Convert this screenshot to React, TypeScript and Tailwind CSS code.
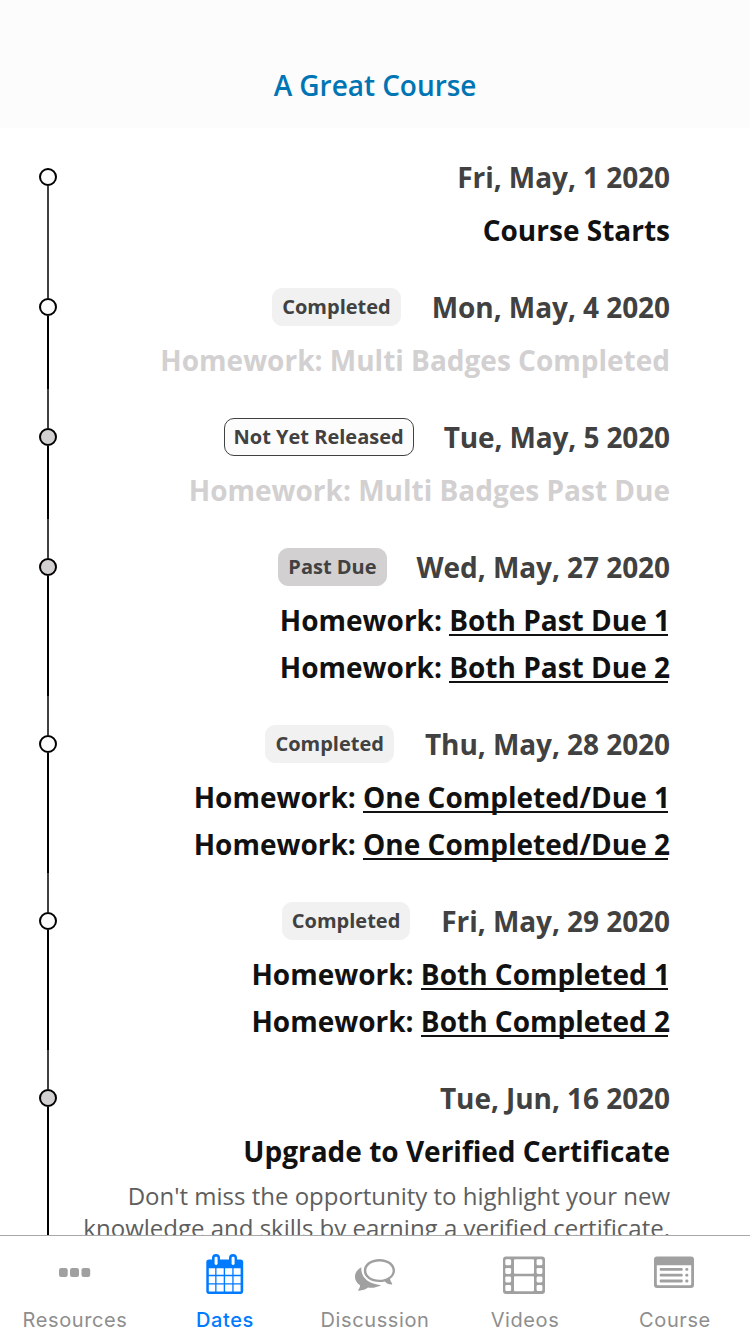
import React from "react";

type Badge = "completed" | "pending" | "pastDue";

interface CourseEvent {
  date: string;
  badge?: Badge;
  filled?: boolean;
  muted?: boolean;
  items: { label: string; link?: string }[];
  description?: string[];
}

const events: CourseEvent[] = [
  { date: "Fri, May, 1 2020", items: [{ label: "Course Starts" }] },
  { date: "Mon, May, 4 2020", badge: "completed", muted: true, items: [{ label: "Homework: Multi Badges Completed" }] },
  { date: "Tue, May, 5 2020", badge: "pending", filled: true, muted: true, items: [{ label: "Homework: Multi Badges Past Due" }] },
  {
    date: "Wed, May, 27 2020", badge: "pastDue", filled: true,
    items: [{ label: "Homework: ", link: "Both Past Due 1" }, { label: "Homework: ", link: "Both Past Due 2" }],
  },
  {
    date: "Thu, May, 28 2020", badge: "completed",
    items: [{ label: "Homework: ", link: "One Completed/Due 1" }, { label: "Homework: ", link: "One Completed/Due 2" }],
  },
  {
    date: "Fri, May, 29 2020", badge: "completed",
    items: [{ label: "Homework: ", link: "Both Completed 1" }, { label: "Homework: ", link: "Both Completed 2" }],
  },
  {
    date: "Tue, Jun, 16 2020", filled: true,
    items: [{ label: "Upgrade to Verified Certificate" }],
    description: ["Don't miss the opportunity to highlight your new", "knowledge and skills by earning a verified certificate."],
  },
];

const badges: Record<Badge, { text: string; style: string }> = {
  completed: { text: "Completed", style: "border-[#f1f1f1] bg-[#f1f1f1] mr-[31px]" },
  pending: { text: "Not Yet Released", style: "border-[#414141] bg-[#fcfcfc] mr-[30px]" },
  pastDue: { text: "Past Due", style: "border-[#d2d0d1] bg-[#d2d0d1] mr-[30px]" },
};

function EventRow({ event, first }: { event: CourseEvent; first: boolean }) {
  const badge = event.badge && badges[event.badge];
  return (
    <li className="flex shrink-0">
      <div className="ml-[39px] flex w-[18px] shrink-0 flex-col items-center">
        <div className={`h-[39px] w-[2px] shrink-0 ${first ? "" : "bg-[#414141]"}`} />
        <div className={`h-[18px] w-[18px] shrink-0 rounded-full border-2 border-black ${event.filled ? "bg-[#d2d0d1]" : "bg-[#fcfcfc]"}`} />
        <div className={`w-[2px] grow ${first ? "bg-[#414141]" : "bg-black"}`} />
      </div>
      <div className="flex grow flex-col pr-[80px] pb-[5px] text-right">
        <div className="mt-[29px] flex h-[38px] items-center justify-end">
          {badge && (
            <span className={`flex h-[38px] items-center rounded-[10px] border px-[9px] text-[20px] font-bold text-[#414141] ${badge.style}`}>
              <span className="pb-[1px]">{badge.text}</span>
            </span>
          )}
          <span className={`text-[28px] leading-[38px] font-bold text-[#414141] ${event.badge === "pending" ? "tracking-[-0.12px]" : "tracking-[-0.06px]"}`}>{event.date}</span>
        </div>
        <div className={`mt-[11px] text-[28px] leading-[47px] font-bold ${event.muted ? "text-[#d2d0d1]" : "text-[#111111]"}`}>
          {event.items.map((item, i) => (
            <div key={i} className="h-[47px] whitespace-nowrap">
              {item.label}
              {item.link && <a className="bg-[linear-gradient(#111111,#111111)] bg-[length:calc(100%-2px)_2px] bg-[position:0_33px] bg-no-repeat">{item.link}</a>}
            </div>
          ))}
        </div>
        {event.description && (
          <div className="mt-[5px] text-[24px] leading-[32px] text-[#5e5e5e]">
            {event.description.map((line) => (
              <div key={line} className="whitespace-nowrap">{line}</div>
            ))}
          </div>
        )}
      </div>
    </li>
  );
}

const DotsIcon = () => (
  <svg width="32" height="40" viewBox="0 0 32 40" fill="currentColor">
    <rect x="0" y="14" width="8.7" height="9" rx="2.2" />
    <rect x="11" y="14" width="9" height="9" rx="2.2" />
    <rect x="22.5" y="14" width="8.7" height="9" rx="2.2" />
  </svg>
);

const CalendarIcon = () => (
  <svg width="38" height="40" viewBox="0 0 38 40">
    <path fill="currentColor" fillRule="evenodd" d="M3 5.5H6V4a4 4 0 0 1 8 0V5.5H23V4a4 4 0 0 1 8 0V5.5H34.5Q37.2 5.5 37.2 8V37Q37.2 40 34.5 40H3Q.3 40 .3 37V8Q.3 5.5 3 5.5ZM2.8 14.2V20.8H9.2V14.2ZM10.5 14.2V20.8H17.7V14.2ZM19.1 14.2V20.8H26.3V14.2ZM27.6 14.2V20.8H34.6V14.2ZM2.8 22.2V29.2H9.2V22.2ZM10.5 22.2V29.2H17.7V22.2ZM19.1 22.2V29.2H26.3V22.2ZM27.6 22.2V29.2H34.6V22.2ZM2.8 30.6V37.4H9.2V30.6ZM10.5 30.6V37.4H17.7V30.6ZM19.1 30.6V37.4H26.3V30.6ZM27.6 30.6V37.4H34.6V30.6Z" />
    <rect x="8.6" y="2.7" width="3" height="8.3" rx="1.4" fill="white" />
    <rect x="25.6" y="2.7" width="3" height="8.3" rx="1.4" fill="white" />
  </svg>
);

const ChatIcon = () => (
  <svg width="40" height="40" viewBox="0 0 40 40" fill="currentColor">
    <path fillRule="evenodd" d="M24.5 5C33.5 5 40 10 40 16.5C40 20 38.2 23 35 25.1C35.3 26.8 36 28.2 37.1 29.4C37.4 29.8 37.2 30.7 36.5 30.6C33.7 30.4 31.4 29.3 29.9 27.5C28.1 28 26.4 28.1 24.5 28.1C15.5 28.1 8.8 23.2 8.8 16.5C8.8 10 15.5 5 24.5 5ZM24.5 7.4C17 7.4 11.3 11.3 11.3 16.5C11.3 21.8 17 25.8 24.5 25.8C27 25.8 29.2 25.4 31.2 24.5C35.3 23 37.6 20 37.6 16.5C37.6 11.3 32 7.4 24.5 7.4Z" />
    <path d="M6.3 13.2C5.5 23.5 13.5 30 26.2 31.2C22.5 33 18 34.3 13 33.6C10.8 35.4 7.5 36.5 4 36.7C2.8 36.7 3 35.8 3.6 35.2C4.5 34.2 5 32.7 5.1 31.2C-2.2 26.5-1.7 17.8 6.3 13.2Z" />
  </svg>
);

const FilmIcon = () => (
  <svg className="mr-[2px]" width="42" height="40" viewBox="0 0 42 40">
    <path fill="currentColor" fillRule="evenodd" d="M3 2.5H39Q42 2.5 42 5.5V37Q42 40 39 40H3Q0 40 0 37V5.5Q0 2.5 3 2.5ZM12 5.3Q11 5.3 11 6.3V18.7Q11 19.7 12 19.7H30Q31 19.7 31 18.7V6.3Q31 5.3 30 5.3ZM12 22.3Q11 22.3 11 23.3V36.2Q11 37.2 12 37.2H30Q31 37.2 31 36.2V23.3Q31 22.3 30 22.3Z" />
    {[2.3, 33.6].map((x) => [5.3, 13.9, 22.4, 31.1].map((y) => (
      <rect key={`${x}-${y}`} x={x} y={y} width="5.8" height="6" rx="1.4" fill="white" />
    )))}
  </svg>
);

const CourseIcon = () => (
  <svg className="mr-[2px]" width="40" height="40" viewBox="0 0 40 40" fill="currentColor">
    <path fillRule="evenodd" d="M3 2.5H37Q40 2.5 40 5.5V31Q40 34 37 34H3Q0 34 0 31V5.5Q0 2.5 3 2.5ZM2.8 11.3V30Q2.8 31.3 4 31.3H36Q37.2 31.3 37.2 30V11.3Z" />
    {[13.9, 19.8, 25.6].map((y) => (
      <g key={y}>
        <rect x="5.7" y={y} width="23" height="2.8" rx="1" />
        <rect x="31.3" y={y} width="3" height="2.8" rx="1.2" />
      </g>
    ))}
  </svg>
);

const tabs = [
  { label: "Resources", Icon: DotsIcon },
  { label: "Dates", Icon: CalendarIcon, active: true },
  { label: "Discussion", Icon: ChatIcon },
  { label: "Videos", Icon: FilmIcon },
  { label: "Course", Icon: CourseIcon },
];

export default function App() {
  return (
    <div className="flex h-[1334px] w-[750px] flex-col overflow-hidden bg-white font-['Open_Sans',sans-serif]">
      <header className="flex h-[128px] shrink-0 justify-center bg-[#fcfcfc] pt-[66px]">
        <h1 className="text-[28px] leading-[38px] font-semibold tracking-[-0.05px] text-[#0075b4]">A Great Course</h1>
      </header>
      <ul className="flex min-h-0 grow flex-col overflow-hidden pt-[1px]">
        {events.map((event, i) => <EventRow key={event.date} event={event} first={i === 0} />)}
      </ul>
      <nav className="grid h-[99px] shrink-0 grid-cols-5 border-t border-[#a8a8a8] bg-white font-['Inter',sans-serif]">
        {tabs.map(({ label, Icon, active }) => (
          <div key={label} className={`flex flex-col items-center pt-[18px] ${active ? "text-[#007aff]" : "text-[#a0a0a0]"}`}>
            <Icon />
            <span className={`mt-[14px] text-[20px] leading-[24px] tracking-[0.6px] ${active ? "font-medium" : "font-normal text-[#8e8e8e]"}`}>{label}</span>
          </div>
        ))}
      </nav>
    </div>
  );
}
